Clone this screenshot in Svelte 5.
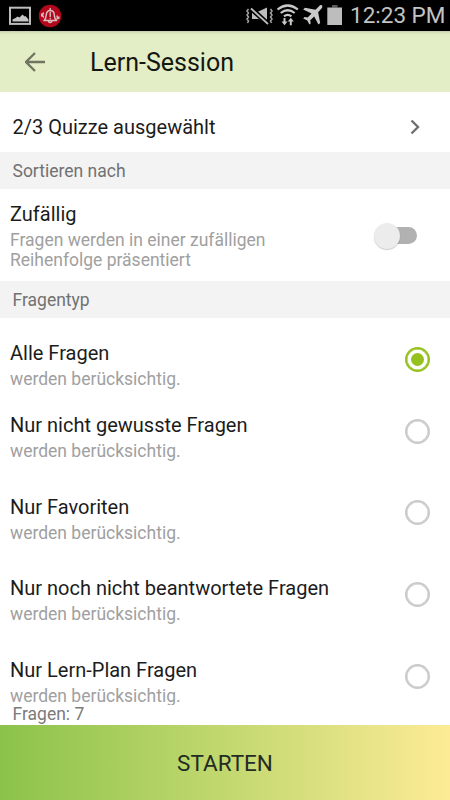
<script lang="ts">
  type Option = { id: string; title: string };

  const options: Option[] = [
    { id: 'all', title: 'Alle Fragen' },
    { id: 'unknown', title: 'Nur nicht gewusste Fragen' },
    { id: 'favorites', title: 'Nur Favoriten' },
    { id: 'unanswered', title: 'Nur noch nicht beantwortete Fragen' },
    { id: 'plan', title: 'Nur Lern-Plan Fragen' }
  ];

  let selected = $state('all');
  let shuffle = $state(false);
  const questionCount = 7;
</script>

<div class="screen">
  <div class="status-bar">
    <svg class="notifications" width="56" height="31" viewBox="0 0 56 31" aria-hidden="true">
      <rect x="2" y="7.700" width="20" height="16.200" fill="none" stroke="#bdbdbd" stroke-width="2" />
      <path d="M4.500 21.500v-2l3-1.500 2-1.500 2 1 3-3 2 2 1-.5 3 3.500v2z" fill="#c6c6c6" />
      <circle cx="42" cy="16" r="11.200" fill="#b3071b" />
      <g fill="none" stroke="#d9c3c5" stroke-width="1.400" stroke-linecap="round" stroke-linejoin="round">
        <path d="M36 20.500c2-1.500 2-3 2.300-6 .3-2.500 1.700-4 3.900-4s3.800 1.500 4 4c.3 3 .5 4.500 2.300 6z" />
        <path d="M42.200 8.500v2M40.500 21.500q1.600 2.200 3.300 0M42.200 12.500v4M42.200 18.500v.3M35.500 13q-2 2 0 4M33.700 14v2M49 16q1 1.500 0 3M50.800 17v1.500" />
      </g>
    </svg>

    <svg class="system" width="102" height="31" viewBox="245 0 102 31" aria-hidden="true">
      <!-- vibrating, muted speaker -->
      <path d="M252 11.500h6.500l8.500-4v15.500l-8.500-4H252z" fill="#bdbdbd" />
      <path d="M251 8.500l17 15.500" fill="none" stroke="#000" stroke-width="5" />
      <path d="M251 8.500l17 15.500" fill="none" stroke="#bdbdbd" stroke-width="1.800" />
      <path
        d="M248.500 9l-1.500 2 1.500 2-1.500 2 1.500 2-1.500 2 1.500 2-1 2M270.500 9l1.500 2-1.500 2 1.500 2-1.500 2 1.500 2-1.500 2 1 2"
        fill="none"
        stroke="#a5a5a5"
        stroke-width="1.500"
      />
      <g fill="none" stroke="#c9c9c9" stroke-width="2.200">
        <path d="M277.500 9.500q10.200-8 20.400 0M280.700 13q7-5.500 14 0M284 16.300q3.700-3 7.400 0" />
      </g>
      <path d="M283.500 18h2v3.500h2l-3 3.700-3-3.700h2zM289.800 25.200v-3.700h-2l3-3.700 3 3.700h-2v3.700z" fill="#c9c9c9" />
      <path
        d="M321.800 5.300c1 .9.500 2.500-.5 3.500l-3.200 3.400 2.100 10.700-1.800 1.700-4.200-8.200-4 3.800.5 3.200-1.300 1.200-2.100-4.100-4.100-2.100 1.300-1.300 3.200.4 3.800-3.900-8.300-4 1.800-1.900 10.500 2.100 3.300-3.400c1-1 2.200-1.800 3-1.100z"
        fill="#c9c9c9"
      />
      <path d="M332 5h5.500v2.500H332z" fill="#5c5c5c" />
      <path d="M327.300 7.500h14.700V25h-14.700z" fill="#bdbdbd" />
    </svg>
    <span class="clock">12:23 PM</span>
  </div>

  <header class="app-bar">
    <button class="back" aria-label="Zurück">
      <svg width="20" height="20" viewBox="0 0 20 20">
        <path d="M20 10H1.500M10 1l-9 9 9 9" fill="none" stroke="#6f755f" stroke-width="2.300" />
      </svg>
    </button>
    <h1>Lern-Session</h1>
  </header>

  <button class="quiz-row">
    <span>2/3 Quizze ausgewählt</span>
    <svg width="10" height="16" viewBox="0 0 10 16" aria-hidden="true">
      <path d="M1.500 1.500L8 8l-6.500 6.500" fill="none" stroke="#707070" stroke-width="2.400" />
    </svg>
  </button>

  <h2 class="section">Sortieren nach</h2>

  <div class="shuffle-row">
    <div class="text">
      <span class="title">Zufällig</span>
      <span class="subtitle">Fragen werden in einer zufälligen Reihenfolge präsentiert</span>
    </div>
    <button
      class="switch"
      class:on={shuffle}
      role="switch"
      aria-checked={shuffle}
      aria-label="Zufällig"
      onclick={() => (shuffle = !shuffle)}
    >
      <span class="thumb"></span>
    </button>
  </div>

  <h2 class="section">Fragentyp</h2>

  <div class="options" role="radiogroup" aria-label="Fragentyp">
    {#each options as option (option.id)}
      <button
        class="option"
        role="radio"
        aria-checked={selected === option.id}
        onclick={() => (selected = option.id)}
      >
        <span class="text">
          <span class="title">{option.title}</span>
          <span class="subtitle">werden berücksichtig.</span>
        </span>
        <span class="radio" class:checked={selected === option.id}></span>
      </button>
    {/each}
  </div>

  <footer>
    <p class="count">Fragen: {questionCount}</p>
    <button class="start">STARTEN</button>
  </footer>
</div>

<style>
  :global(body) {
    background: #fff;
  }

  .screen {
    display: flex;
    flex-direction: column;
    width: 450px;
    height: 800px;
    overflow: hidden;
    background: #fff;
    color: #1c1c1c;
    font-family: Roboto, 'Liberation Sans', sans-serif;
  }

  button {
    padding: 0;
    border: none;
    background: none;
    color: inherit;
    font: inherit;
    text-align: left;
    cursor: pointer;
  }

  h1,
  h2,
  p {
    margin: 0;
    font-weight: 400;
  }

  .status-bar {
    display: flex;
    flex: none;
    align-items: center;
    height: 31px;
    padding: 0 6px 0 8px;
    background: #000;
  }

  .system {
    margin-left: auto;
  }

  .clock {
    width: 94px;
    margin-left: 3px;
    color: #c3c3c3;
    font-size: 22.5px;
    line-height: 31px;
    white-space: nowrap;
  }

  .app-bar {
    display: flex;
    flex: none;
    align-items: center;
    box-sizing: border-box;
    height: 61px;
    padding-left: 25px;
    background: linear-gradient(#c2cba9, #dce7bf 2px, #e4eec6 5px);
  }

  .back {
    display: flex;
    width: 65px;
  }

  h1 {
    padding-top: 2px;
    color: #151711;
    font-size: 25px;
    line-height: 30px;
  }

  .quiz-row {
    display: flex;
    flex: none;
    align-items: center;
    justify-content: space-between;
    box-sizing: border-box;
    height: 60px;
    padding: 10px 30px 0 12.500px;
    font-size: 20px;
  }

  .section {
    flex: none;
    box-sizing: border-box;
    height: 37px;
    padding-left: 12.500px;
    background: #f3f3f3;
    color: #717171;
    font-size: 17.500px;
    line-height: 39px;
  }

  .shuffle-row {
    display: flex;
    flex: none;
    align-items: center;
    justify-content: space-between;
    box-sizing: border-box;
    height: 92px;
    padding: 1px 33px 0 10px;
  }

  .shuffle-row .text {
    gap: 2px;
    width: 290px;
    margin-top: -2px;
  }

  .text {
    display: flex;
    flex-direction: column;
  }

  .title {
    font-size: 20px;
    line-height: 28px;
  }

  .subtitle {
    color: #a0a0a0;
    font-size: 17.500px;
    line-height: 20px;
  }

  .switch {
    display: flex;
    align-items: center;
    width: 35px;
    height: 17px;
    border-radius: 9px;
    background: #b1b1b1;
  }

  .thumb {
    flex: none;
    width: 26px;
    height: 26px;
    margin-left: -8px;
    border-radius: 50%;
    background: #ececec;
    box-shadow: 0 1px 1px rgb(0 0 0 / 0.2);
  }

  .switch.on .thumb {
    margin-left: 17px;
  }

  .switch.on {
    background: #c7df8c;
  }

  .options {
    flex: 1;
    min-height: 0;
    padding-top: 21px;
    overflow: hidden;
  }

  .option {
    display: flex;
    align-items: flex-start;
    justify-content: space-between;
    width: 100%;
    height: 81.700px;
    padding: 0 20px 0 10px;
  }

  .option:first-child {
    height: 72px;
  }

  .option .subtitle {
    margin-top: 3px;
    line-height: 18px;
  }

  .radio {
    display: grid;
    place-items: center;
    box-sizing: border-box;
    width: 25px;
    height: 25px;
    margin-top: 7.500px;
    border: 2px solid #cacaca;
    border-radius: 50%;
    box-shadow: inset 0 0 0 0.500px #cacaca;
  }

  .radio.checked {
    border-color: #95c11f;
    box-shadow: inset 0 0 0 0.500px #95c11f;
  }

  .radio.checked::after {
    width: 13px;
    height: 13px;
    border-radius: 50%;
    background: #95c11f;
    content: '';
  }

  footer {
    flex: none;
  }

  .count {
    height: 20px;
    padding-left: 12.500px;
    color: #7b7b7b;
    font-size: 17.500px;
    line-height: 19px;
  }

  .start {
    display: block;
    width: 100%;
    height: 75px;
    background: linear-gradient(90deg, #8bc34a, #c2d86f 50%, #fdeb96);
    color: #232b24;
    font-size: 22.500px;
    line-height: 76px;
    text-align: center;
  }
</style>
